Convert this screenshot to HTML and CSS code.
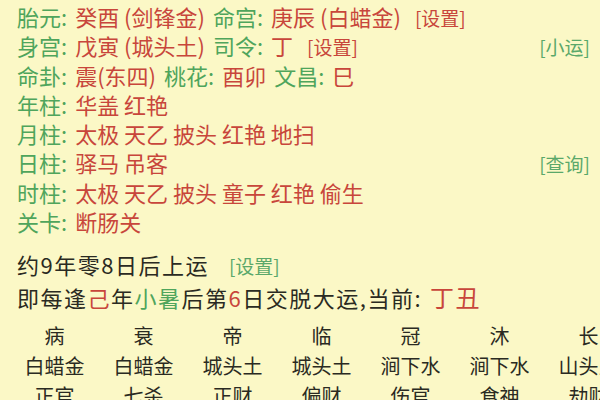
FILE: index.html
```html
<!DOCTYPE html>
<html lang="zh">
  <head>
    <meta charset="UTF-8" />
    <meta name="viewport" content="width=device-width, initial-scale=1.0" />
    <title>八字排盘</title>
    <link rel="stylesheet" href="styles.css">
  </head>
  <body>
    <div class="info">
      <div class="line">
        <span class="label">胎元:</span> <span class="val">癸酉 (剑锋金)</span>
        <span class="label">命宫:</span> <span class="val">庚辰 (白蜡金)</span>
        <span class="link red">[设置]</span>
      </div>
      <div class="line">
        <span class="label">身宫:</span> <span class="val">戊寅 (城头土)</span>
        <span class="label">司令:</span> <span class="val">丁</span>
        <span class="link red">[设置]</span>
        <span class="link green right">[小运]</span>
      </div>
      <div class="line">
        <span class="label">命卦:</span> <span class="val">震(东四)</span>
        <span class="label">桃花:</span> <span class="val">酉卯</span>
        <span class="label">文昌:</span> <span class="val">巳</span>
      </div>
      <div class="line">
        <span class="label">年柱:</span> <span class="val">华盖 红艳</span>
      </div>
      <div class="line">
        <span class="label">月柱:</span> <span class="val">太极 天乙 披头 红艳 地扫</span>
      </div>
      <div class="line">
        <span class="label">日柱:</span> <span class="val">驿马 吊客</span>
        <span class="link green right">[查询]</span>
      </div>
      <div class="line">
        <span class="label">时柱:</span> <span class="val">太极 天乙 披头 童子 红艳 偷生</span>
      </div>
      <div class="line">
        <span class="label">关卡:</span> <span class="val">断肠关</span>
      </div>
    </div>

    <div class="yun">
      <div class="line">约9年零8日后上运 <span class="link green">[设置]</span></div>
      <div class="line">即每逢<span class="val">己</span>年<span class="label">小暑</span>后第<span class="val">6</span>日交脱大运,当前: <span class="val big">丁丑</span></div>
    </div>

    <div class="grid">
      <div>病</div><div>衰</div><div>帝</div><div>临</div><div>冠</div><div>沐</div><div>长</div>
      <div>白蜡金</div><div>白蜡金</div><div>城头土</div><div>城头土</div><div>涧下水</div><div>涧下水</div><div>山头火</div>
      <div>正官</div><div>七杀</div><div>正财</div><div>偏财</div><div>伤官</div><div>食神</div><div>劫财</div>
    </div>
  </body>
</html>
```

FILE: styles.css
```css
html,
body {
  overflow: hidden;
}

body {
  margin: 0;
  padding: 2px 10px 0 17px;
  background-color: #fbf8c6;
  color: #2a2a22;
  font-family: "Noto Sans CJK SC", "Noto Sans", sans-serif;
  font-size: 22px;
  width: 600px;
  height: 400px;
  box-sizing: border-box;
}

.line {
  display: flex;
  align-items: baseline;
  gap: 0 8px;
  height: 29.3px;
  line-height: 29.3px;
  white-space: nowrap;
}

.label {
  color: #4fa55c;
}

.val {
  color: #c8463b;
}

.link {
  font-size: 19px;
  margin-left: 6px;
  letter-spacing: 0;
}

.red {
  color: #c8463b;
}

.green {
  color: #5aa86a;
}

.right {
  margin-left: auto;
}

.yun {
  margin-top: 14px;
}

.yun .line {
  gap: 0;
  letter-spacing: 1.5px;
}

.yun .line + .line {
  margin-top: 2px;
}

.yun .link {
  margin-left: 20px;
}

.big {
  font-size: 24px;
  margin-left: 8px;
}

.grid {
  display: grid;
  grid-template-columns: repeat(7, 89px);
  grid-auto-rows: 30px;
  margin: 10px 0 0 -7px;
  font-size: 20px;
  text-align: center;
  line-height: 30px;
  color: #2a2a22;
}
```
